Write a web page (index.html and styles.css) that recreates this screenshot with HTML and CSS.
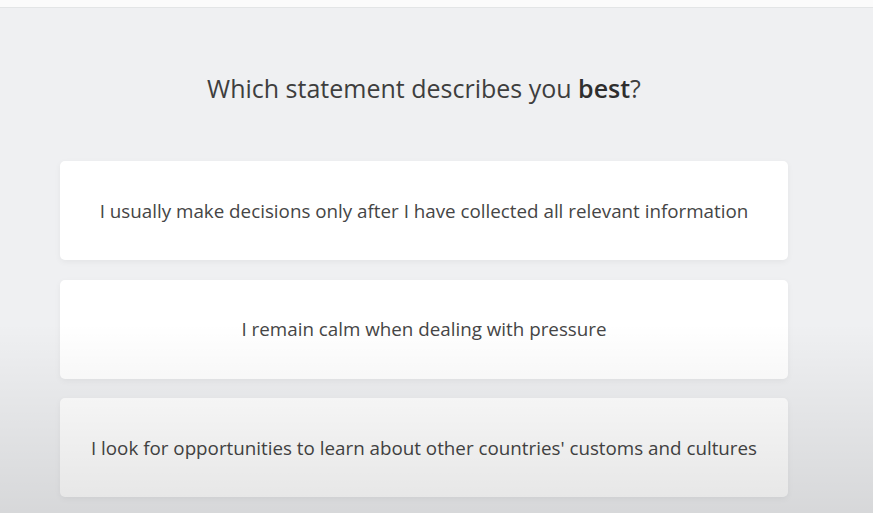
FILE: index.html
```html
<!DOCTYPE html>
<html lang="en">
<head>
<meta charset="utf-8">
<title>Which statement describes you best?</title>
<link rel="stylesheet" href="styles.css">
</head>
<body>
<div class="topbar"></div>
<main class="page">
  <div class="column">
    <h1 class="question">Which statement describes you <strong>best</strong>?</h1>
    <div class="options">
      <button class="option">I usually make decisions only after I have collected all relevant information</button>
      <button class="option">I remain calm when dealing with pressure</button>
      <button class="option">I look for opportunities to learn about other countries' customs and cultures</button>
    </div>
  </div>
</main>
<div class="shade"></div>
</body>
</html>
```

FILE: styles.css
```css
* { box-sizing: border-box; }
html, body {
  margin: 0;
  padding: 0;
  width: 873px;
  height: 513px;
  overflow: hidden;
  background: #eff0f2;
  font-family: "Open Sans", "Noto Sans", sans-serif;
}
.topbar {
  height: 8px;
  background: #fbfbfb;
  border-bottom: 1px solid #e3e5e6;
}
.page {
  padding-top: 62px;
}
.column {
  width: 728px;
  margin-left: 60px;
  display: flex;
  flex-direction: column;
  align-items: center;
}
.question {
  margin: 0;
  font-size: 25px;
  line-height: 36px;
  font-weight: 400;
  color: #3e3e3e;
  text-align: center;
}
.question strong {
  font-weight: 600;
  color: #2e2e2e;
}
.options {
  margin-top: 55px;
  width: 100%;
  display: flex;
  flex-direction: column;
  gap: 19.5px;
}
.option {
  height: 99px;
  width: 100%;
  border: none;
  border-radius: 5px;
  background: #ffffff;
  box-shadow: 0 2px 6px rgba(0, 0, 0, 0.05);
  font-family: "Open Sans", "Noto Sans", sans-serif;
  font-size: 18.8px;
  letter-spacing: 0;
  color: #454545;
  text-align: center;
  padding: 0 6px;
  cursor: pointer;
}
.shade {
  position: absolute;
  left: 0;
  right: 0;
  bottom: 0;
  height: 190px;
  background: linear-gradient(to bottom, rgba(0,0,0,0), rgba(0,0,0,0.05) 50%, rgba(0,0,0,0.1));
  pointer-events: none;
}
```
